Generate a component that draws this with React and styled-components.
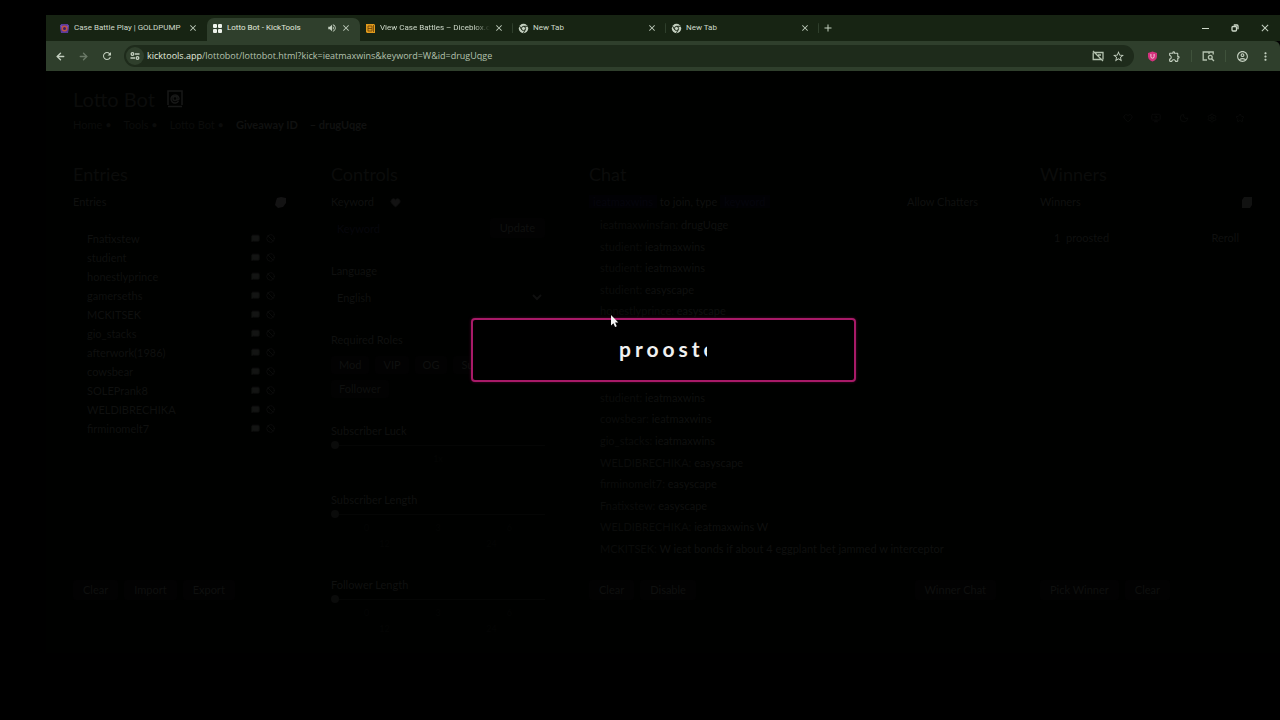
import React from "react";
import styled, { createGlobalStyle } from "styled-components";
import {
  ArrowLeft,
  ArrowRight,
  Ban,
  Heart,
  MessageSquare,
  MonitorPlay,
  Moon,
  Settings,
  Star,
} from "lucide-react";
import {
  MdClose,
  MdOutlineAccountCircle,
  MdOutlineExtension,
  MdRefresh,
  MdStarBorder,
  MdVolumeUp,
  MdAdd,
  MdMoreVert,
} from "react-icons/md";

const entries = [
  "Fnatixstew",
  "studient",
  "honestlyprince",
  "gamerseths",
  "MCKITSEK",
  "gio_stacks",
  "afterwork(1986)",
  "cowsbear",
  "SOLEPrank8",
  "WELDIBRECHIKA",
  "firminomelt7",
];

// null keeps an empty line in the log
const messages = [
  ["ieatmaxwinsfan", "drugUqge"],
  ["studient", "ieatmaxwins"],
  ["studient", "ieatmaxwins"],
  ["studient", "easyscape"],
  ["honestlyprince", "easyscape"],
  null,
  null,
  null,
  ["studient", "ieatmaxwins"],
  ["cowsbear", "ieatmaxwins"],
  ["gio_stacks", "ieatmaxwins"],
  ["WELDIBRECHIKA", "easyscape"],
  ["firminomelt7", "easyscape"],
  ["Fnatixstew", "easyscape"],
  ["WELDIBRECHIKA", "ieatmaxwins W"],
  ["MCKITSEK", "W ieat bonds if about 4 eggplant bet jammed w interceptor"],
];

const TabItem = ({ icon, title, active, audio, divided, fade }) => (
  <Tab $active={active} $divided={divided}>
    {icon}
    <TabTitle $active={active} $fade={fade}>{title}</TabTitle>
    {audio && <MdVolumeUp size={10} />}
    <IconButton aria-label={`Close ${title}`}><MdClose size={10} /></IconButton>
  </Tab>
);

const GoldIcon = () => (
  <svg width="11" height="11" viewBox="0 0 11 11">
    <path d="M2 1h7l1 4-1 5H2L1 5z" fill="#5b3a9a" />
    <path d="M1 2l3 1-2 2zM10 2L7 3l2 2z" fill="#7a52c4" />
    <circle cx="5.5" cy="5.5" r="3" fill="#c2553f" />
    <circle cx="5.5" cy="5.5" r="1.5" fill="#3b1d69" />
  </svg>
);

const GridIcon = () => (
  <svg width="11" height="11" viewBox="0 0 11 11" fill="#eef3ec">
    <rect x="1" y="1" width="4" height="4" rx="1" />
    <rect x="6" y="1" width="4" height="4" rx="1" />
    <rect x="1" y="6" width="4" height="4" rx="1" />
    <rect x="6" y="6" width="4" height="4" rx="1" />
  </svg>
);

const DiceIcon = () => (
  <svg width="11" height="11" viewBox="0 0 11 11">
    <path d="M1 1h8l1 1v8H2l-1-1z" fill="#e09a1c" />
    <path d="M3 3h4v5H3zM3 5.5h4M8.5 2v7" fill="none" stroke="#6b4308" strokeWidth="0.8" />
  </svg>
);

const ChromeIcon = () => (
  <svg width="11" height="11" viewBox="0 0 11 11">
    <circle cx="5.5" cy="5.5" r="4.7" fill="#c4d0c0" />
    <circle cx="5.5" cy="5.5" r="2.1" fill="#c4d0c0" stroke="#172413" strokeWidth="0.9" />
    <path d="M5.5 3.3H9.8M3.6 6.6L1.5 3M7.4 6.6L5.3 10.2" stroke="#172413" strokeWidth="0.9" />
  </svg>
);

const TuneIcon = () => (
  <svg width="10" height="10" viewBox="0 0 10 10" fill="none" stroke="#c4d0c0" strokeWidth="1.3">
    <circle cx="2.5" cy="3" r="1.3" />
    <path d="M5 3h4.5M0.5 7H5" />
    <circle cx="7.5" cy="7" r="1.3" />
  </svg>
);

const CastOffIcon = () => (
  <svg width="12" height="12" viewBox="0 0 12 12" fill="none" stroke="#b4c2af" strokeWidth="1.3">
    <path d="M3 2.5h8v7M9 9.5H1.2v-7M1 1l10 10M6 5h3" />
  </svg>
);

const ShieldIcon = () => (
  <svg width="11" height="11" viewBox="0 0 11 11">
    <path d="M5.5 0.5l4.5 1.5v3.5c0 2.5-2 4-4.5 5C3 9.5 1 8 1 5.5V2z" fill="#d3327d" />
    <path d="M3.9 3v2.6a1.6 1.6 0 003.2 0V3" fill="none" stroke="#f8cadd" strokeWidth="1" />
  </svg>
);

const SearchPanelIcon = () => (
  <svg width="13" height="12" viewBox="0 0 13 12" fill="none" stroke="#b4c2af" strokeWidth="1.3">
    <path d="M5 10H1.2V2h10v2.5M7 2v2" />
    <circle cx="8.3" cy="7.3" r="1.9" />
    <path d="M9.7 8.7l2.3 2.3" />
  </svg>
);

const RestoreIcon = () => (
  <svg width="8" height="8" viewBox="0 0 8 8" fill="none" stroke="#cdd8c9" strokeWidth="1.3">
    <rect x="1" y="2.5" width="4.5" height="4.5" rx="1" />
    <path d="M2.8 1H6a1 1 0 011 1v3.2" />
  </svg>
);

const TitleIcon = () => (
  <svg width="16" height="18" viewBox="0 0 16 18" fill="none" stroke="#171817" strokeWidth="1.5">
    <path d="M1 15V1h14v14M1 16.5h14M11.5 11A4 4 0 1112 8.5c0 1.5-2 1.5-2 0M10 8.5a2 2 0 11-4 0 2 2 0 014 0" />
  </svg>
);

const LeafIcon = () => (
  <svg width="13" height="13" viewBox="0 0 13 13" fill="#131313">
    <path d="M3 2l4-1 5 1v5l-3 4-5 1-3-3 1-4z" />
  </svg>
);

const CopyIcon = () => (
  <svg width="12" height="13" viewBox="0 0 12 13" fill="#111211">
    <path d="M3 1h8v8l-2 3H1V4z" />
  </svg>
);

const Pointer = () => (
  <Cursor width="9" height="14" viewBox="0 0 9 14">
    <path d="M1 1v10.5l2.4-2.2 1.7 3.7 1.7-.8-1.7-3.6H8.3z" fill="#f3f3f3" />
  </Cursor>
);

const SliderField = ({ id, label, ticks }) => (
  <Section $tight>
    <Label htmlFor={id}>{label}</Label>
    <Slider id={id} type="range" min="0" max="24" defaultValue="0" />
    {ticks.map((row) => (
      <Ticks key={row.join()}>
        {row.map((tick) => <span key={tick}>{tick}</span>)}
      </Ticks>
    ))}
  </Section>
);

const App = () => {
  return (
    <>
      <GlobalStyle />
      <Browser>
        <TabStrip>
          <TabItem icon={<GoldIcon />} title="Case Battle Play | GOLDPUMP" />
          <TabItem icon={<GridIcon />} title="Lotto Bot - KickTools" active audio />
          <TabItem icon={<DiceIcon />} title="View Case Battles – Diceblox.com" divided fade />
          <TabItem icon={<ChromeIcon />} title="New Tab" divided />
          <TabItem icon={<ChromeIcon />} title="New Tab" divided />
          <NewTab aria-label="New tab"><MdAdd size={12} /></NewTab>
          <WindowControls>
            <IconButton aria-label="Minimize"><MinimizeLine /></IconButton>
            <IconButton aria-label="Restore"><RestoreIcon /></IconButton>
            <IconButton aria-label="Close window"><MdClose size={12} /></IconButton>
          </WindowControls>
        </TabStrip>
        <Toolbar>
          <NavButtons>
            <IconButton aria-label="Back"><ArrowLeft size={11} strokeWidth={3} /></IconButton>
            <IconButton aria-label="Forward" $dim><ArrowRight size={11} strokeWidth={3} /></IconButton>
            <IconButton aria-label="Reload"><MdRefresh size={12} /></IconButton>
          </NavButtons>
          <AddressBar>
            <SiteInfo aria-label="Site information"><TuneIcon /></SiteInfo>
            <Url href="#url">
              <b>kicktools.app</b>/lottobot/lottobot.html?kick=ieatmaxwins&amp;keyword=W&amp;id=drugUqge
            </Url>
            <IconButton aria-label="Cast"><CastOffIcon /></IconButton>
            <IconButton aria-label="Bookmark"><MdStarBorder size={13} /></IconButton>
          </AddressBar>
          <Extensions>
            <IconButton aria-label="Shield"><ShieldIcon /></IconButton>
            <IconButton aria-label="Extensions"><MdOutlineExtension size={13} /></IconButton>
            <Divider />
            <IconButton aria-label="Search panel"><SearchPanelIcon /></IconButton>
            <Divider />
            <IconButton aria-label="Profile"><MdOutlineAccountCircle size={13} /></IconButton>
            <IconButton aria-label="Menu"><MdMoreVert size={13} /></IconButton>
          </Extensions>
        </Toolbar>

        <Page>
          <Header>
            <div>
              <Title>Lotto Bot <TitleIcon /></Title>
              <Crumbs>
                <span>Home •</span>
                <span>Tools •</span>
                <span>Lotto Bot •</span>
                <strong>Giveaway ID</strong>
                <strong>– drugUqge</strong>
              </Crumbs>
            </div>
            <HeaderIcons>
              <Heart size={10} />
              <MonitorPlay size={10} />
              <Moon size={10} />
              <Settings size={10} />
              <Star size={10} />
            </HeaderIcons>
          </Header>

          <Columns>
            <Column>
              <Heading>Entries</Heading>
              <LabelRow><span>Entries</span><LeafIcon /></LabelRow>
              <EntryList>
                {entries.map((name) => (
                  <Entry key={name}>
                    <span>{name}</span>
                    <MessageSquare size={9} fill="#131413" />
                    <Ban size={9} />
                  </Entry>
                ))}
              </EntryList>
              <Footer>
                <Button>Clear</Button>
                <Button>Import</Button>
                <Button>Export</Button>
              </Footer>
            </Column>

            <div>
              <Heading>Controls</Heading>
              <Sections>
                <Section>
                  <Label htmlFor="keyword">Keyword <Heart size={11} fill="#121212" /></Label>
                  <FieldRow>
                    <TextInput id="keyword" placeholder="Keyword" />
                    <Button>Update</Button>
                  </FieldRow>
                </Section>
                <Section>
                  <Label htmlFor="language">Language</Label>
                  <Select id="language"><option>English</option></Select>
                </Section>
                <Section>
                  <Label as="span">Required Roles</Label>
                  <Roles>
                    {["Mod", "VIP", "OG", "Sub", "Follower"].map((role) => (
                      <RoleButton key={role}>{role}</RoleButton>
                    ))}
                  </Roles>
                </Section>
                <SliderField id="luck" label="Subscriber Luck" ticks={[["1x"]]} />
                <SliderField id="sub" label="Subscriber Length" ticks={[["0", "3", "6"], ["12", "24"]]} />
                <SliderField id="follow" label="Follower Length" ticks={[["0", "3", "6"], ["12", "24"]]} />
              </Sections>
            </div>

            <Column>
              <Heading>Chat</Heading>
              <LabelRow>
                <span><Blue>ieatmaxwins</Blue> to join, type <Blue>keyword</Blue></span>
                <Allow>Allow Chatters</Allow>
              </LabelRow>
              <ChatLog>
                {messages.map((message, i) => (
                  <p key={i}>
                    {message && <><span>{message[0]}:</span> {message[1]}</>}
                  </p>
                ))}
              </ChatLog>
              <Footer>
                <Button>Clear</Button>
                <Button>Disable</Button>
                <Button $end>Winner Chat</Button>
              </Footer>
            </Column>

            <Column>
              <Heading>Winners</Heading>
              <LabelRow><span>Winners</span><CopyIcon /></LabelRow>
              <WinnerRow><span>1&nbsp; proosted</span><span>Reroll</span></WinnerRow>
              <Footer>
                <Button>Pick Winner</Button>
                <Button>Clear</Button>
              </Footer>
            </Column>
          </Columns>

          <Overlay>
            <WinnerBox role="dialog" aria-label="Winner">
              <Pointer />
              <Reel>proosted</Reel>
            </WinnerBox>
          </Overlay>
        </Page>
      </Browser>
    </>
  );
};

export default App;

const GlobalStyle = createGlobalStyle`
  * {
    box-sizing: border-box;
  }
  body {
    margin: 0;
    background: #000;
  }
  button, input, select {
    font: inherit;
    color: inherit;
  }
  svg {
    flex: none;
  }
`;

const Browser = styled.div`
  margin: 15px 0 0 46px;
  font-family: "Open Sans", "Noto Sans", sans-serif;
  color: #c4d0c0;
`;

const TabStrip = styled.div`
  display: flex;
  align-items: stretch;
  height: 26px;
  padding: 3px 0 0 8px;
  background: #172413;
`;

const Tab = styled.div`
  display: flex;
  align-items: center;
  gap: 4px;
  flex: 0 1 153px;
  min-width: 0;
  padding: 0 9px 3px 5px;
  border-radius: 7px 7px 0 0;
  background: ${(props) => (props.$active ? "#2f3f2c" : "transparent")};
  background-image: ${(props) =>
    props.$divided ? "linear-gradient(#2f3f2c, #2f3f2c)" : "none"};
  background-size: 1px 10px;
  background-position: right 5px;
  background-repeat: no-repeat;
`;

const TabTitle = styled.span`
  flex: 1;
  min-width: 0;
  overflow: hidden;
  white-space: nowrap;
  font-family: Roboto, "Open Sans", sans-serif;
  font-size: 8px;
  line-height: 12px;
  color: ${(props) => (props.$active ? "#e2eade" : "#cdd8c9")};
  mask-image: ${(props) =>
    props.$fade ? "linear-gradient(90deg, #000 85%, transparent)" : "none"};
`;

const IconButton = styled.button`
  display: flex;
  align-items: center;
  justify-content: center;
  min-width: 9px;
  padding: 0;
  border: 0;
  background: none;
  opacity: ${(props) => (props.$dim ? 0.4 : 1)};
`;

const NewTab = styled(IconButton)`
  width: 17px;
  padding-bottom: 3px;
`;

const WindowControls = styled.div`
  display: grid;
  grid-template-columns: repeat(3, 30px);
  margin-left: auto;
  padding-bottom: 3px;
`;

const MinimizeLine = styled.span`
  width: 7px;
  height: 1px;
  background: #cdd8c9;
`;

const Toolbar = styled.div`
  display: flex;
  align-items: center;
  height: 30px;
  padding: 0 8px 0 9px;
  border-radius: 0 6px 0 0;
  background: #2f3f2c;
`;

const NavButtons = styled.div`
  display: flex;
  justify-content: space-between;
  width: 58px;
  margin-right: 11px;
`;

const AddressBar = styled.div`
  display: flex;
  align-items: center;
  gap: 8px;
  flex: 1;
  min-width: 0;
  height: 22px;
  padding: 0 9px 0 2px;
  border-radius: 11px;
  background: #1e2b1b;
`;

const SiteInfo = styled(IconButton)`
  width: 18px;
  height: 18px;
  margin-right: -5px;
  border-radius: 50%;
  background: #2f3f2c;
`;

const Url = styled.a`
  flex: 1;
  min-width: 0;
  overflow: hidden;
  white-space: nowrap;
  font-size: 9px;
  line-height: 14px;
  color: #b4c2af;
  text-decoration: none;

  b {
    font-weight: 500;
    color: #e2eade;
  }
`;

const Extensions = styled.div`
  display: flex;
  align-items: center;
  gap: 10px;
  padding-left: 13px;
`;

const Divider = styled.span`
  width: 1px;
  height: 12px;
  background: #3f523b;
`;

const Page = styled.main`
  position: relative;
  padding: 16px 27px;
  background: #000100;
  font-family: Lato, "Open Sans", sans-serif;
  font-size: 11px;
  line-height: 16px;
  color: #0f100f;
`;

const Header = styled.header`
  display: flex;
  align-items: center;
  justify-content: space-between;
`;

const Title = styled.h1`
  display: flex;
  align-items: center;
  gap: 12px;
  margin: 0 0 6px;
  font-size: 20px;
  font-weight: 400;
  line-height: 24px;
  color: #0b0c0b;
`;

const Crumbs = styled.div`
  display: flex;
  gap: 12px;
  color: #0b0c0b;

  strong {
    color: #101110;
  }
`;

const HeaderIcons = styled.div`
  display: flex;
  gap: 18px;
  padding: 16px 8px 0 0;
  color: #0b0c0b;
`;

const Columns = styled.div`
  display: grid;
  grid-template-columns: 214fr 214fr 407fr 213fr;
  align-items: start;
  gap: 44px;
  margin-top: 29px;
`;

const Column = styled.section`
  display: flex;
  flex-direction: column;
  min-width: 0;
  min-height: 438px;
`;

const Heading = styled.h2`
  margin: 0 0 8px;
  font-size: 18px;
  font-weight: 400;
  line-height: 24px;
  color: #0b0c0b;
`;

const LabelRow = styled.div`
  display: flex;
  align-items: center;
  justify-content: space-between;
`;

const Allow = styled.span`
  padding-right: 18px;
`;

const Blue = styled.span`
  padding: 0 4px;
  background: #010104;
  color: #05050c;
`;

const EntryList = styled.ul`
  margin: 19px 0 0;
  padding: 0 12px 0 14px;
  list-style: none;
`;

const Entry = styled.li`
  display: flex;
  align-items: center;
  gap: 6px;
  height: 19px;

  span {
    flex: 1;
  }
`;

const Footer = styled.div`
  display: flex;
  gap: 6px;
  margin-top: auto;
`;

const Button = styled.button`
  height: 20px;
  margin-left: ${(props) => (props.$end ? "auto" : "0")};
  padding: 0 10px;
  border: 0;
  border-radius: 3px;
  background: #020202;
`;

const RoleButton = styled(Button)`
  height: 18px;
  padding: 0 8px;
`;

const Sections = styled.div`
  display: grid;
  gap: 25px;
`;

const Section = styled.div`
  display: grid;
  gap: ${(props) => (props.$tight ? "0" : "8px")};
`;

const Label = styled.label`
  display: flex;
  align-items: center;
  gap: 16px;
`;

const FieldRow = styled.div`
  display: flex;
  gap: 8px;
`;

const TextInput = styled.input`
  flex: 1;
  min-width: 0;
  height: 20px;
  padding: 0 6px;
  border: 0;
  background: transparent;

  &::placeholder {
    color: #07070c;
  }
`;

const Select = styled.select`
  height: 20px;
  padding: 0 2px;
  border: 0;
  background: transparent;
`;

const Roles = styled.div`
  display: flex;
  flex-wrap: wrap;
  gap: 6px;
`;

const Slider = styled.input`
  width: 100%;
  height: 12px;
  margin: 0;
  appearance: none;
  background: linear-gradient(#050605, #050605) center / 100% 1px no-repeat;

  &::-webkit-slider-thumb {
    appearance: none;
    width: 8px;
    height: 8px;
    border-radius: 50%;
    background: #0a0b0a;
  }
`;

const Ticks = styled.div`
  display: flex;
  justify-content: space-around;
  font-size: 9px;
  line-height: 16px;
  color: #040504;
`;

const ChatLog = styled.div`
  display: flex;
  flex-direction: column;
  justify-content: space-between;
  height: 340px;
  margin-top: 7px;
  padding-left: 11px;
  overflow: hidden;

  p {
    min-height: 16px;
    margin: 0;
    white-space: nowrap;
  }

  span {
    color: #0b0c0b;
  }
`;

const WinnerRow = styled(LabelRow)`
  padding: 20px 14px 0 14px;
`;

const Overlay = styled.div`
  position: absolute;
  inset: 0;
  display: flex;
  align-items: flex-start;
  justify-content: center;
  padding-top: 247px;
`;

const WinnerBox = styled.div`
  position: relative;
  display: flex;
  align-items: center;
  justify-content: center;
  width: 385px;
  max-width: 90%;
  height: 64px;
  border: 2px solid #a81a68;
  border-radius: 4px;
  background: #000;
  box-shadow: 0 0 3px #4d0a2f;
`;

const Reel = styled.div`
  width: 88px;
  padding-bottom: 2px;
  overflow: hidden;
  white-space: nowrap;
  font-size: 21px;
  font-weight: 700;
  line-height: 32px;
  letter-spacing: 4px;
  color: #f0f0f0;
`;

const Cursor = styled.svg`
  position: absolute;
  top: -6px;
  left: 137px;
`;
